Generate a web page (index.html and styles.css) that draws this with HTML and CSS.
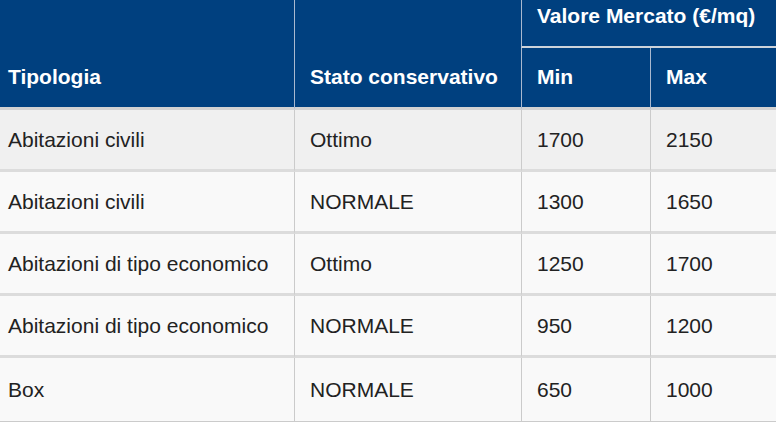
FILE: index.html
```html
<!DOCTYPE html>
<html lang="it">
<head>
<meta charset="utf-8">
<title>Valori di mercato</title>
<link rel="stylesheet" href="styles.css">
</head>
<body>
<table class="prices">
  <colgroup>
    <col class="c-tipo">
    <col class="c-stato">
    <col class="c-min">
    <col class="c-max">
  </colgroup>
  <thead>
    <tr class="h1">
      <th rowspan="2" class="first">Tipologia</th>
      <th rowspan="2" class="sep">Stato conservativo</th>
      <th colspan="2" class="sep group">Valore Mercato (€/mq)</th>
    </tr>
    <tr class="h2">
      <th class="sep">Min</th>
      <th class="sep">Max</th>
    </tr>
  </thead>
  <tbody>
    <tr class="odd">
      <td class="first">Abitazioni civili</td>
      <td class="sep">Ottimo</td>
      <td class="sep">1700</td>
      <td class="sep">2150</td>
    </tr>
    <tr>
      <td class="first">Abitazioni civili</td>
      <td class="sep">NORMALE</td>
      <td class="sep">1300</td>
      <td class="sep">1650</td>
    </tr>
    <tr>
      <td class="first">Abitazioni di tipo economico</td>
      <td class="sep">Ottimo</td>
      <td class="sep">1250</td>
      <td class="sep">1700</td>
    </tr>
    <tr>
      <td class="first">Abitazioni di tipo economico</td>
      <td class="sep">NORMALE</td>
      <td class="sep">950</td>
      <td class="sep">1200</td>
    </tr>
    <tr class="last">
      <td class="first">Box</td>
      <td class="sep">NORMALE</td>
      <td class="sep">650</td>
      <td class="sep">1000</td>
    </tr>
  </tbody>
</table>
</body>
</html>
```

FILE: styles.css
```css
html, body {
  margin: 0;
  padding: 0;
  background: #ffffff;
  overflow: hidden;
}

body {
  font-family: "Liberation Sans", Arial, sans-serif;
  font-size: 21px;
  line-height: 24px;
  color: #222222;
}

.prices {
  border-collapse: separate;
  border-spacing: 0;
  table-layout: fixed;
  width: 779px;
}

.c-tipo { width: 294px; }
.c-stato { width: 227px; }
.c-min { width: 129px; }
.c-max { width: 129px; }

.prices th {
  background: #00407f;
  color: #ffffff;
  font-weight: bold;
  text-align: left;
  vertical-align: bottom;
  padding: 0 16px 18px 15px;
  border-bottom: 3px solid #d2d2d2;
  white-space: nowrap;
}

.prices th.first {
  padding-left: 8px;
}

.prices th.sep {
  border-left: 1px solid #a9b9cf;
}

.prices th.group {
  border-bottom: 2px solid #cdd3da;
}

.h1 { height: 48px; }
.h2 { height: 62px; }

.prices tbody tr { height: 62px; background: #f9f9f9; }
.prices tbody tr.odd { background: #f0f0f0; }

.prices td {
  vertical-align: middle;
  padding: 1px 16px 0 15px;
  border-bottom: 3px solid #dcdcdc;
  white-space: nowrap;
}

.prices td.first {
  padding-left: 8px;
}

.prices td.sep {
  border-left: 1px solid #cbcbcb;
}

.prices tbody tr.last { height: 64px; }
.prices tr.last td { border-bottom: 1px solid #cbcbcb; }
```
